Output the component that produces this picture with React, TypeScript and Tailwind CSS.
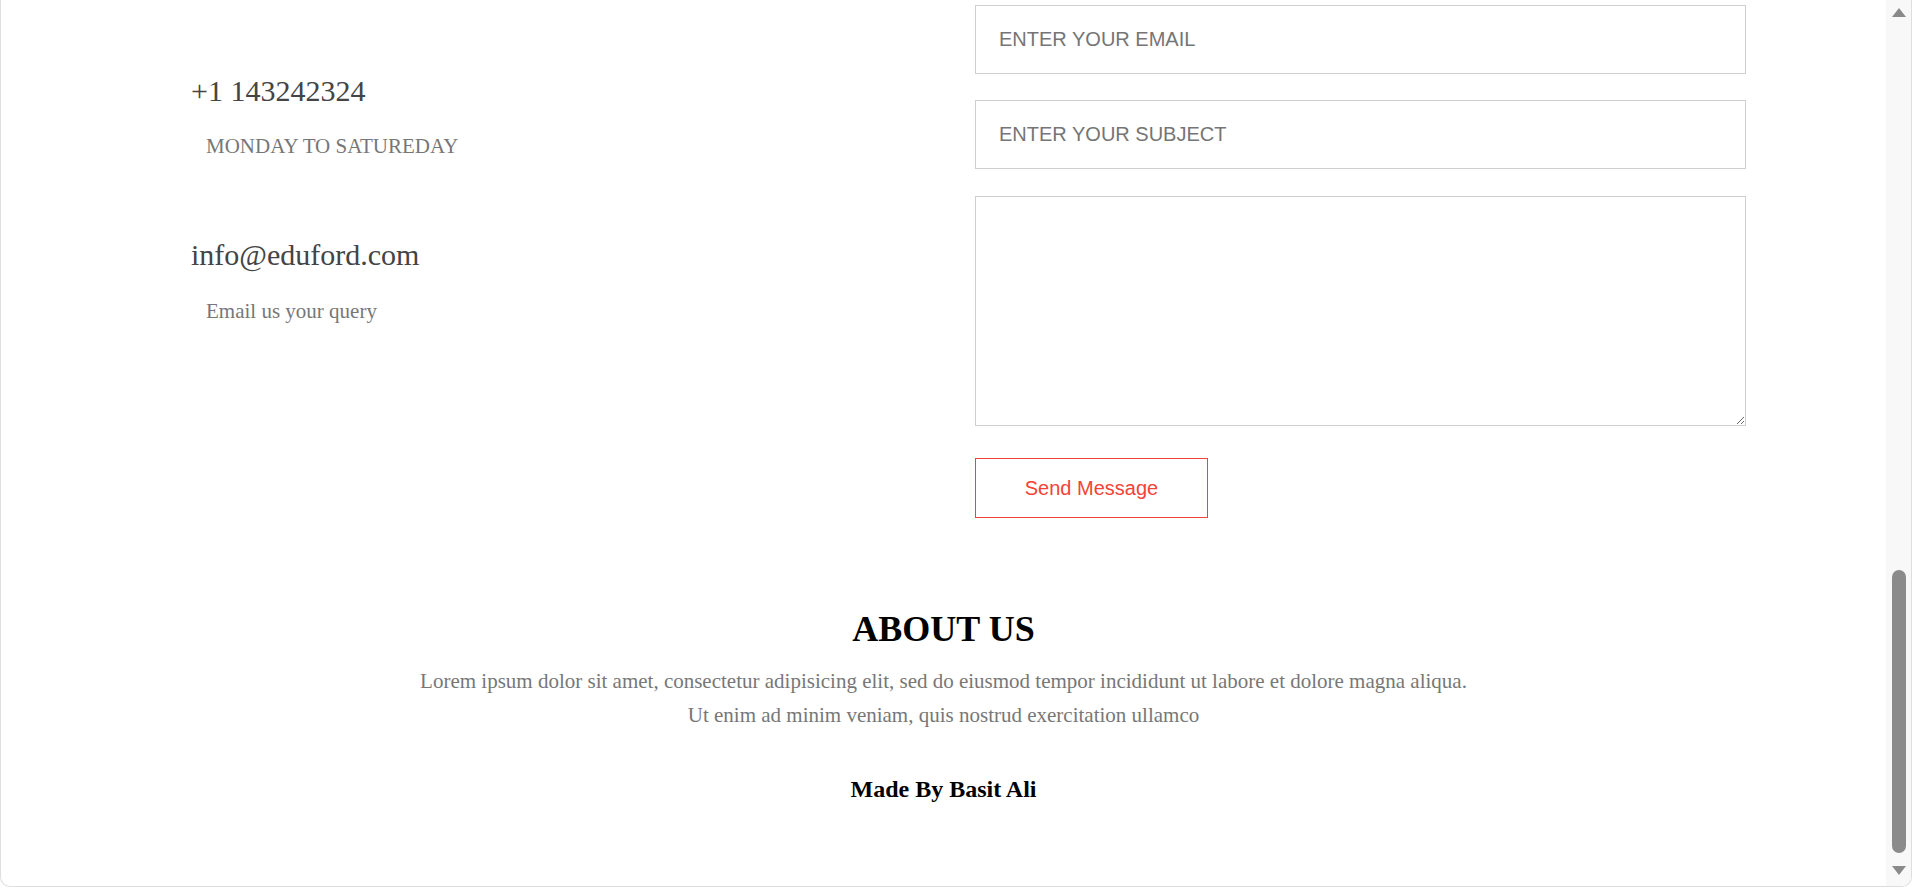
import { useState } from "react"

const serif = "font-['Liberation_Serif',serif]"

function ContactInfo() {
  return (
    <div className={`w-[834px] pl-[50px] ${serif}`}>
      <div className="mt-[69px] text-[30px] leading-[34px] text-[#444]">+1 143242324</div>
      <p className="mt-[26px] pl-[15px] text-[21px] leading-[24px] text-[#777]">MONDAY TO SATUREDAY</p>

      <div className="mt-[80px] text-[30px] leading-[34px] text-[#444]">info@eduford.com</div>
      <p className="mt-[27px] pl-[15px] text-[21px] leading-[24px] text-[#777]">Email us your query</p>
    </div>
  )
}

function ContactForm() {
  const [email, setEmail] = useState("")
  const [subject, setSubject] = useState("")
  const [message, setMessage] = useState("")

  const field =
    "block w-full border border-[#cfcfcf] bg-white px-[23px] text-[20px] text-[#333] outline-none placeholder:text-[#757575] font-['Liberation_Sans',Arial,sans-serif]"

  return (
    <form className="w-[771px]" onSubmit={(e) => e.preventDefault()}>
      <input
        type="email"
        value={email}
        onChange={(e) => setEmail(e.target.value)}
        placeholder="ENTER YOUR EMAIL"
        className={`${field} h-[69px]`}
      />
      <input
        type="text"
        value={subject}
        onChange={(e) => setSubject(e.target.value)}
        placeholder="ENTER YOUR SUBJECT"
        className={`${field} mt-[26px] h-[69px]`}
      />
      <textarea
        value={message}
        onChange={(e) => setMessage(e.target.value)}
        className={`${field} mt-[27px] h-[230px] py-3`}
      />
      <button
        type="submit"
        className="mt-[32px] h-[60px] w-[233px] border border-[#f44336] bg-white text-[20px] text-[#f44336] font-['Liberation_Sans',Arial,sans-serif]"
      >
        Send Message
      </button>
    </form>
  )
}

function Footer() {
  return (
    <section className={`text-center ${serif}`}>
      <h1 className="mt-[90px] text-[36px] font-bold leading-[42px] text-black">ABOUT US</h1>
      <p className="mt-[14px] text-[21px] leading-[34px] text-[#777]">
        Lorem ipsum dolor sit amet, consectetur adipisicing elit, sed do eiusmod tempor incididunt ut labore et dolore magna aliqua.
        <br />
        Ut enim ad minim veniam, quis nostrud exercitation ullamco
      </p>
      <h3 className="mt-[43px] text-[24px] font-bold leading-[28px] text-black">Made By Basit Ali</h3>
    </section>
  )
}

// fake browser scrollbar, page is shown scrolled to the bottom
function ScrollBar() {
  return (
    <div className="flex w-[25px] flex-col items-center bg-[#f8f8f8] pt-[8px] pb-[11px]">
      <svg width="14" height="9" viewBox="0 0 14 9">
        <polygon points="7,0 14,9 0,9" fill="#8a8a8a" />
      </svg>
      <div className="flex-1" />
      <div className="h-[283px] w-[14px] rounded-full bg-[#8b8b8b]" />
      <div className="h-[13px]" />
      <svg width="14" height="9" viewBox="0 0 14 9">
        <polygon points="0,0 14,0 7,9" fill="#8a8a8a" />
      </svg>
    </div>
  )
}

export default function App() {
  return (
    <div className="h-[889px] w-[1915px] overflow-hidden bg-white">
      <div className="flex h-[887px] w-[1912px] overflow-hidden rounded-b-[10px] border-x border-b border-[#dedede] bg-white">
        <main className="flex-1 pt-[5px]">
          <div className="mx-auto flex w-[1605px]">
            <ContactInfo />
            <ContactForm />
          </div>
          <Footer />
        </main>
        <ScrollBar />
      </div>
    </div>
  )
}
